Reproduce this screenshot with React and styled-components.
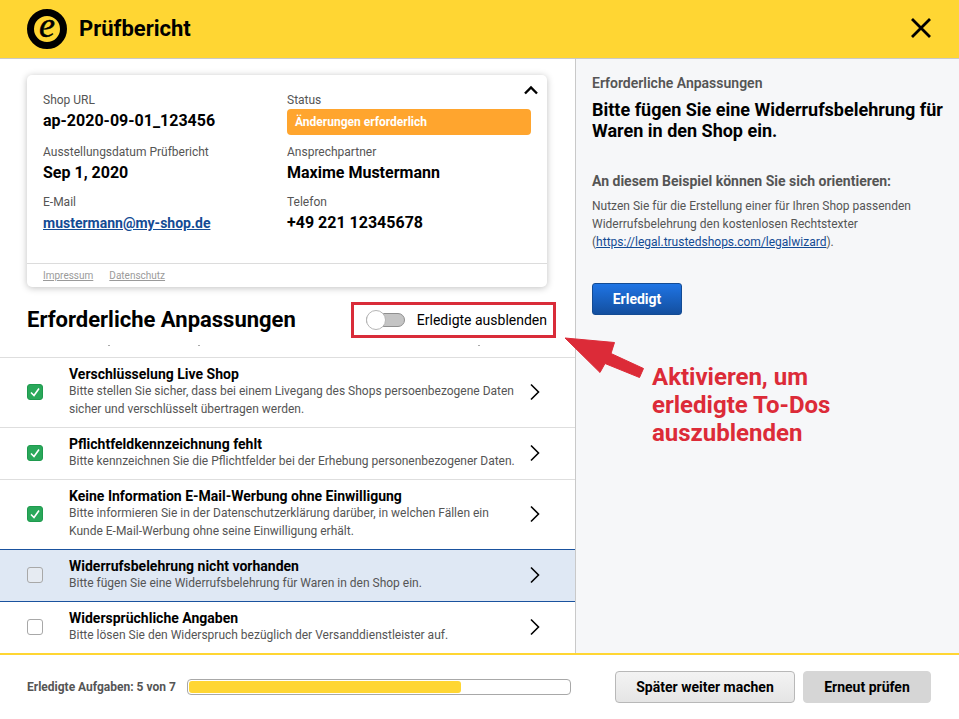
import React from "react";
import styled, { createGlobalStyle } from "styled-components";

const Global = createGlobalStyle`
  html, body { margin: 0; padding: 0; background: #fff; }
  * { box-sizing: border-box; }
  body { font-family: Roboto, "Liberation Sans", sans-serif; color: #000; }
`;
const Page = styled.div`
  position: relative; width: 959px; height: 719px; overflow: hidden;
  display: flex; flex-direction: column; background: #fff;
`;
const Header = styled.header`
  height: 59px; flex: none; background: #ffd633; border-bottom: 1px solid #c9c9c9;
  display: flex; align-items: center; justify-content: space-between; padding: 0 27px;
`;
const Brand = styled.div`display: flex; align-items: center; gap: 12px;`;
const LogoRing = styled.div`
  width: 40px; height: 40px; flex: none; border-radius: 50%; border: 7px solid #000; background: #ffd633;
  display: flex; align-items: center; justify-content: center;
`;
const LogoMark = styled.span`
  font-family: "Liberation Serif", serif; font-style: italic; font-size: 36px; line-height: 36px; height: 36px;
  margin-top: -8px; -webkit-text-stroke: .5px #000;
`;
const Title = styled.h1`margin: 0; font-size: 22px; font-weight: 700; line-height: 28px;`;
const CloseBtn = styled.div`display: flex; width: 22px; height: 22px;`;
const Main = styled.div`flex: 1; display: flex; min-height: 0;`;
const Left = styled.section`width: 575px; flex: none; display: flex; flex-direction: column; padding-top: 16px; overflow: hidden;`;
const Card = styled.div`
  position: relative; margin: 0 28px 0 27px; height: 212px; border-radius: 5px; background: #fff;
  box-shadow: 0 1px 7px rgba(0,0,0,.25); display: flex; flex-direction: column; flex: none;
`;
const CardGrid = styled.div`
  flex: 1; display: grid; grid-template-columns: 244px 244px; grid-template-rows: 52px 50px 50px; padding: 17px 16px 0;
  align-content: start;
`;
const Field = styled.div`display: flex; flex-direction: column;`;
const FieldLabel = styled.div`font-size: 12px; line-height: 16px; color: #555;`;
const FieldValue = styled.div`font-size: 16px; font-weight: 700; line-height: 24px; margin-top: 1px;`;
const MailLink = styled.a`font-size: 14px; font-weight: 700; line-height: 24px; margin-top: 1px; color: #134b94; text-decoration: underline;`;
const Pill = styled.div`
  height: 26px; margin-top: 1px; border-radius: 4px; background: #ffa52e; color: #fff; font-size: 12px; font-weight: 700;
  display: flex; align-items: center; padding-left: 8px;
`;
const Collapse = styled.div`position: absolute; top: 9px; right: 8px; display: flex;`;
const CardFoot = styled.div`
  height: 24px; border-top: 1px solid #dcdcdc; display: flex; gap: 16px; align-items: center; padding-left: 16px;
`;
const FootLink = styled.a`font-size: 10px; color: #9a9a9a; text-decoration: underline;`;
const SectionHead = styled.div`
  flex: none; height: 58px; padding: 7px 28px 0 27px; display: flex; align-items: center; justify-content: space-between;
`;
const SectionTitle = styled.h2`margin: 0; font-size: 22px; font-weight: 700; line-height: 28px;`;
const Toggle = styled.div`display: flex; align-items: center; gap: 12px;`;
const Track = styled.div`
  position: relative; width: 39px; height: 14px; border-radius: 7px; background: #c4c4c4; border: 1px solid #8f8f8f;
`;
const Knob = styled.div`
  position: absolute; left: -1px; top: -4px; width: 20px; height: 20px; border-radius: 50%; background: #fff; border: 1px solid #b5b5b5;
`;
const ToggleLabel = styled.span`font-size: 14px; line-height: 18px;`;
const Residue = styled.div`
  flex: none; height: 1px; margin-bottom: 11px;
  background: linear-gradient(#aaa, #aaa) 108px 0 / 2px 1px no-repeat,
              linear-gradient(#aaa, #aaa) 198px 0 / 2px 1px no-repeat,
              linear-gradient(#aaa, #aaa) 478px 0 / 2px 1px no-repeat;
`;
const List = styled.ul`list-style: none; margin: 0; padding: 0; flex: 1; min-height: 0; overflow: hidden; border-top: 1px solid #dedede;`;
const Row = styled.li`
  height: ${p => p.$tall ? 70 : 52}px; display: flex; align-items: center; padding: 0 34px 2px 27px;
  background: ${p => p.$active ? "#dfe8f4" : "#fff"};
  border-bottom: 1px solid ${p => p.$active ? "#1a529e" : "#dedede"};
  ${p => p.$active ? "box-shadow: 0 -1px 0 #1a529e;" : ""}
  &:last-child { border-bottom: 0; }
`;
const Check = styled.div`
  width: 16px; height: 16px; flex: none; border-radius: 3px; margin-right: 26px; display: flex; align-items: center; justify-content: center;
  background: ${p => p.$on ? "#29a85a" : p.$active ? "#e6ebf2" : "#fff"};
  border: 1px solid ${p => p.$on ? "#1f9a4e" : "#a8a8a8"};
`;
const RowText = styled.div`flex: 1; min-width: 0; padding-right: 10px;`;
const RowTitle = styled.div`font-size: 14px; font-weight: 700; line-height: 16px;`;
const RowDesc = styled.div`font-size: 12px; line-height: 18px; color: #555; max-width: 450px;`;
const Chevron = styled.div`flex: none; display: flex; width: 12px;`;
const Right = styled.aside`flex: 1; background: #f6f7f9; border-left: 1px solid #c9c9c9; padding: 16px 15px 0 16px;`;
const PanelLabel = styled.div`font-size: 14px; font-weight: 600; line-height: 16px; color: #555;`;
const PanelTitle = styled.h3`margin: 8px 0 0; font-size: 18px; font-weight: 700; line-height: 21px;`;
const PanelSub = styled.div`margin-top: 31px; font-size: 14px; font-weight: 700; line-height: 18px; color: #555;`;
const PanelBody = styled.p`margin: 7px 0 0; font-size: 12px; line-height: 18px; color: #555;`;
const BodyLink = styled.a`color: #134b94; text-decoration: underline;`;
const Done = styled.div`
  margin-top: 32px; width: 90px; height: 32px; border-radius: 3px; border: 1px solid #134b94;
  background: linear-gradient(#1f74e4, #134f9f); color: #fff; font-size: 14px; font-weight: 700;
  display: flex; align-items: center; justify-content: center;
`;
const Footer = styled.footer`
  flex: none; height: 66px; border-top: 2px solid #ffd633; background: #fff; display: flex; align-items: center; padding: 0 28px 0 27px;
`;
const Progress = styled.div`font-size: 12px; font-weight: 700; color: #555; width: 160px; flex: none;`;
const Bar = styled.div`width: 384px; height: 16px; flex: none; border: 1px solid #a8a8a8; border-radius: 4px; padding: 1px;`;
const Fill = styled.div`height: 100%; background: #ffd633; border-radius: 3px;`;
const Actions = styled.div`margin-left: 44px; display: flex; gap: 8px;`;
const FootBtn = styled.div`
  height: 32px; width: ${p => p.$w}px; border-radius: 4px; font-size: 14px; font-weight: 700; display: flex; align-items: center; justify-content: center;
  background: ${p => p.$flat ? "#d6d6d6" : "linear-gradient(#f3f3f3, #e5e5e5)"};
  border: 1px solid ${p => p.$flat ? "#d6d6d6" : "#b8b8b8"};
`;
const ToggleFrame = styled.div`
  position: absolute; left: 351px; top: 302px; width: 205px; height: 36px; border: 3px solid #d92c39; pointer-events: none;
`;
const Arrow = styled.svg`position: absolute; left: 555px; top: 325px;`;
const Note = styled.div`
  position: absolute; left: 652px; top: 363px; font-size: 24px; line-height: 28px; font-weight: 700; color: #dc2b38;
`;

const ChevronIcon = () => (
  <svg width="12" height="18" viewBox="0 0 12 18" fill="none" stroke="#000" strokeWidth="1.6">
    <path d="M2 1.5 9.5 9 2 16.5" />
  </svg>
);
const Tick = () => (
  <svg width="12" height="12" viewBox="0 0 12 12" fill="none" stroke="#fff" strokeWidth="1.6">
    <path d="M2 6.5 5 9.5 10 2.5" />
  </svg>
);

const rows = [
  { on: true, tall: true, t: "Verschlüsselung Live Shop", d: "Bitte stellen Sie sicher, dass bei einem Livegang des Shops persoenbezogene Daten sicher und verschlüsselt übertragen werden." },
  { on: true, t: "Pflichtfeldkennzeichnung fehlt", d: "Bitte kennzeichnen Sie die Pflichtfelder bei der Erhebung personenbezogener Daten." },
  { on: true, tall: true, t: "Keine Information E-Mail-Werbung ohne Einwilligung", d: "Bitte informieren Sie in der Datenschutzerklärung darüber, in welchen Fällen ein Kunde E-Mail-Werbung ohne seine Einwilligung erhält." },
  { active: true, t: "Widerrufsbelehrung nicht vorhanden", d: "Bitte fügen Sie eine Widerrufsbelehrung für Waren in den Shop ein." },
  { t: "Widersprüchliche Angaben", d: "Bitte lösen Sie den Widerspruch bezüglich der Versanddienstleister auf." },
];

export default function App() {
  return (
    <Page>
      <Global />
      <Header>
        <Brand><LogoRing><LogoMark>e</LogoMark></LogoRing><Title>Prüfbericht</Title></Brand>
        <CloseBtn>
          <svg width="22" height="22" viewBox="0 0 22 22" stroke="#000" strokeWidth="2.8" fill="none">
            <path d="M2 1 20 19M20 1 2 19" />
          </svg>
        </CloseBtn>
      </Header>
      <Main>
        <Left>
          <Card>
            <Collapse>
              <svg width="16" height="12" viewBox="0 0 16 12" fill="none" stroke="#000" strokeWidth="2.4">
                <path d="M2 9.5 8 3.5 14 9.5" />
              </svg>
            </Collapse>
            <CardGrid>
              <Field><FieldLabel>Shop URL</FieldLabel><FieldValue>ap-2020-09-01_123456</FieldValue></Field>
              <Field><FieldLabel>Status</FieldLabel><Pill>Änderungen erforderlich</Pill></Field>
              <Field><FieldLabel>Ausstellungsdatum Prüfbericht</FieldLabel><FieldValue>Sep 1, 2020</FieldValue></Field>
              <Field><FieldLabel>Ansprechpartner</FieldLabel><FieldValue>Maxime Mustermann</FieldValue></Field>
              <Field><FieldLabel>E-Mail</FieldLabel><MailLink>mustermann@my-shop.de</MailLink></Field>
              <Field><FieldLabel>Telefon</FieldLabel><FieldValue>+49 221 12345678</FieldValue></Field>
            </CardGrid>
            <CardFoot><FootLink>Impressum</FootLink><FootLink>Datenschutz</FootLink></CardFoot>
          </Card>
          <SectionHead>
            <SectionTitle>Erforderliche Anpassungen</SectionTitle>
            <Toggle><Track><Knob /></Track><ToggleLabel>Erledigte ausblenden</ToggleLabel></Toggle>
          </SectionHead>
          <Residue />
          <List>
            {rows.map(r => (
              <Row key={r.t} $tall={r.tall} $active={r.active}>
                <Check $on={r.on} $active={r.active}>{r.on && <Tick />}</Check>
                <RowText><RowTitle>{r.t}</RowTitle><RowDesc>{r.d}</RowDesc></RowText>
                <Chevron><ChevronIcon /></Chevron>
              </Row>
            ))}
          </List>
        </Left>
        <Right>
          <PanelLabel>Erforderliche Anpassungen</PanelLabel>
          <PanelTitle>Bitte fügen Sie eine Widerrufsbelehrung für Waren in den Shop ein.</PanelTitle>
          <PanelSub>An diesem Beispiel können Sie sich orientieren:</PanelSub>
          <PanelBody>
            Nutzen Sie für die Erstellung einer für Ihren Shop passenden Widerrufsbelehrung den kostenlosen Rechtstexter<br />
            <span>(</span><BodyLink>https://legal.trustedshops.com/legalwizard</BodyLink><span>).</span>
          </PanelBody>
          <Done>Erledigt</Done>
        </Right>
      </Main>
      <Footer>
        <Progress>Erledigte Aufgaben: 5 von 7</Progress>
        <Bar><Fill style={{ width: `${(272 / 380) * 100}%` }} /></Bar>
        <Actions>
          <FootBtn $w={180}>Später weiter machen</FootBtn>
          <FootBtn $w={128} $flat>Erneut prüfen</FootBtn>
        </Actions>
      </Footer>
      <ToggleFrame />
      <Arrow width="110" height="65" viewBox="0 0 110 65">
        <polygon points="10,13 59.5,17.5 56,28.5 88.5,43.5 84.5,52.5 50,38.5 45,47.5" fill="#dc2b38" stroke="#dc2b38" strokeWidth="1" strokeLinejoin="round" />
      </Arrow>
      <Note>Aktivieren, um<br />erledigte To-Dos<br />auszublenden</Note>
    </Page>
  );
}
